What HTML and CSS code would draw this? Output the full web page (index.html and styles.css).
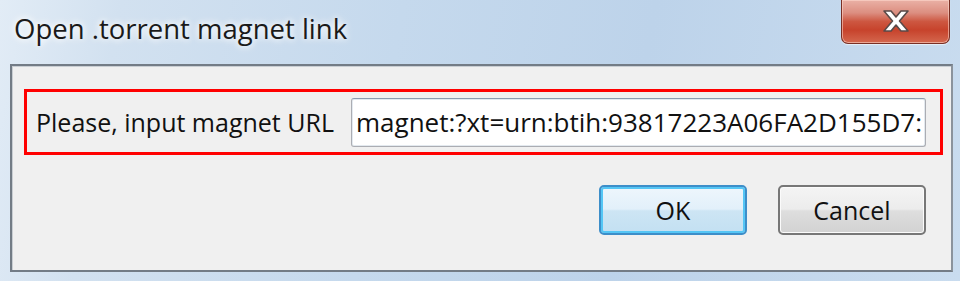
FILE: index.html
```html
<!DOCTYPE html>
<html lang="en">
<head>
<meta charset="utf-8">
<title>Open .torrent magnet link</title>
<link rel="stylesheet" href="styles.css">
</head>
<body>
<div class="window">
  <div class="titlebar">
    <div class="title">Open .torrent magnet link</div>
    <div class="close" aria-label="Close">
      <svg width="28" height="24" viewBox="0 0 28 24">
        <path d="M2 2 H9 L14 8 L19 2 H26 L17.5 12 L26 22 H19 L14 16 L9 22 H2 L10.5 12 Z" fill="#ffffff" stroke="#5a4a48" stroke-width="1.6" stroke-linejoin="round"/>
      </svg>
    </div>
  </div>
  <div class="client">
    <div class="group">
      <span class="label">Please, input magnet URL</span>
      <div class="field">magnet:?xt=urn:btih:93817223A06FA2D155D7:</div>
    </div>
    <div class="buttons">
      <div class="btn btn-default">OK</div>
      <div class="btn">Cancel</div>
    </div>
  </div>
</div>
</body>
</html>
```

FILE: styles.css
```css
html, body {
  margin: 0;
  padding: 0;
}
body {
  width: 960px;
  height: 281px;
  overflow: hidden;
  font-family: "Open Sans", "Noto Sans", "DejaVu Sans", sans-serif;
}
.window {
  width: 960px;
  height: 281px;
  display: flex;
  flex-direction: column;
  background: linear-gradient(100deg, #e2ecf6 0%, #d2e1f0 12%, #c5d9ed 40%, #bdd3ea 65%, #c9dcef 100%);
}
.titlebar {
  height: 64px;
  display: flex;
  align-items: flex-start;
  justify-content: space-between;
}
.title {
  margin-top: 11px;
  margin-left: 14px;
  font-size: 27.5px;
  line-height: 36px;
  color: #1a1a1a;
  text-shadow: 0 0 6px #ffffff, 0 0 10px #ffffff;
}
.close {
  width: 109px;
  height: 44px;
  margin-right: 10px;
  box-sizing: border-box;
  border: 1px solid #7a2f24;
  border-top: none;
  border-radius: 0 0 7px 7px;
  background: linear-gradient(180deg, #eab1a6 0%, #dc8e80 30%, #cd5741 50%, #c7432c 70%, #d4684f 100%);
  box-shadow: inset 0 0 0 1px rgba(255, 220, 210, 0.55), 0 1px 1px rgba(255,255,255,0.6);
  display: flex;
  align-items: center;
  justify-content: center;
}
.close svg {
  display: block;
  margin-top: -2px;
}
.client {
  margin: 0 7px 9px 10px;
  flex: 1;
  box-sizing: border-box;
  background: #f0f0f0;
  border: 2px solid #737c86;
  border-right-color: #8b939c;
  box-shadow: inset 1px 1px 0 #c9ced3;
  display: flex;
  flex-direction: column;
}
.group {
  margin: 23px 0 0 12px;
  width: 919px;
  height: 66px;
  box-sizing: border-box;
  border: 3px solid #ff0000;
  display: flex;
  align-items: center;
  padding: 0 14px 0 9px;
}
.label {
  font-size: 25px;
  color: #111111;
  white-space: nowrap;
}
.field {
  margin-left: auto;
  width: 575px;
  height: 49px;
  box-sizing: border-box;
  background: #ffffff;
  border: 1px solid #abadb3;
  border-top-color: #8a9ab0;
  border-radius: 3px;
  box-shadow: inset 0 0 0 1px #e3e9ef;
  padding: 0 0 0 4px;
  font-size: 26px;
  line-height: 46px;
  color: #111111;
  white-space: nowrap;
  overflow: hidden;
}
.buttons {
  margin-top: 30px;
  padding-right: 25px;
  display: flex;
  justify-content: flex-end;
  gap: 31px;
}
.btn {
  width: 148px;
  height: 50px;
  box-sizing: border-box;
  border: 2px solid #777777;
  border-radius: 5px;
  background: linear-gradient(180deg, #f4f4f4 0%, #ececec 48%, #dedede 52%, #d2d2d2 100%);
  box-shadow: inset 0 0 0 1px #fbfbfb;
  display: flex;
  align-items: center;
  justify-content: center;
  font-size: 25px;
  color: #111111;
}
.btn-default {
  border-color: #3d8ec9;
  background: linear-gradient(180deg, #eef6fc 0%, #e2f0fa 48%, #cde5f4 52%, #c3e0f2 100%);
  box-shadow: inset 0 0 0 2px #55c6f5;
}
```
